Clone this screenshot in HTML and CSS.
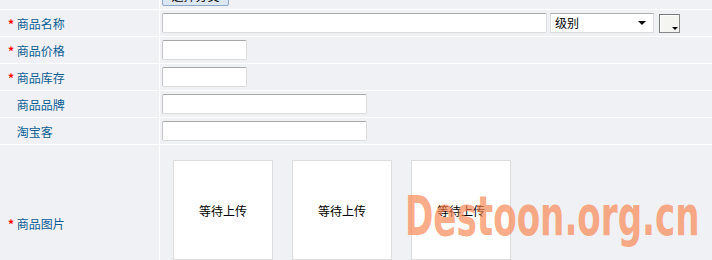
FILE: index.html
```html
<!DOCTYPE html>
<html lang="zh-CN">
<head>
  <meta charset="UTF-8">
  <title>添加商品</title>
  <link rel="stylesheet" href="styles.css">
</head>
<body>
  <div class="page">
  <table class="form">
    <tr class="top">
      <td class="tl"></td>
      <td><button class="btn">选择分类</button></td>
    </tr>
    <tr>
      <td class="tl"><span class="f_red">*</span> 商品名称</td>
      <td>
        <div class="line">
          <input type="text" class="inp name">
          <div class="sel">级别<span class="arr"></span></div>
          <div class="color"><span class="arr small"></span></div>
        </div>
      </td>
    </tr>
    <tr>
      <td class="tl"><span class="f_red">*</span> 商品价格</td>
      <td><input type="text" class="inp short"></td>
    </tr>
    <tr>
      <td class="tl"><span class="f_red">*</span> 商品库存</td>
      <td><input type="text" class="inp short"></td>
    </tr>
    <tr>
      <td class="tl"><span class="f_red none">*</span> 商品品牌</td>
      <td><input type="text" class="inp mid"></td>
    </tr>
    <tr>
      <td class="tl"><span class="f_red none">*</span> 淘宝客</td>
      <td><input type="text" class="inp mid"></td>
    </tr>
    <tr class="thumbs">
      <td class="tl"><span class="f_red">*</span> 商品图片</td>
      <td>
        <div class="pics">
          <div class="pic">等待上传</div>
          <div class="pic">等待上传</div>
          <div class="pic">等待上传</div>
        </div>
      </td>
    </tr>
  </table>
  <div class="mark">Destoon.org.cn</div>
  </div>
</body>
</html>
```

FILE: styles.css
```css
body{
  margin: 0;
  background-color: #f0f1f4;
  font-family: "Noto Sans CJK SC", "Noto Sans", sans-serif;
  font-size: 12px;
  overflow: hidden;
}
.page{
  position: relative;
  height: 260px;
  overflow: hidden;
}
.form{
  border-collapse: collapse;
  width: 100%;
  margin-top: -17px;
}
.form td{
  border-bottom: 1px solid #ffffff;
  height: 26px;
  padding: 0 0 0 2px;
  vertical-align: middle;
}
.form td.tl{
  width: 151px;
  padding-left: 8px;
  border-right: 1px solid #ffffff;
  color: #0a5e94;
  white-space: nowrap;
}
.f_red{
  color: #ff0000;
  font-weight: bold;
}
.f_red.none{
  visibility: hidden;
}
.btn{
  display: block;
  width: 67px;
  height: 22px;
  margin-top: -2px;
  background-color: #dde7f1;
  border: 1px solid #8ea8c8;
  border-radius: 2px;
  font-size: 12px;
  font-family: inherit;
  padding: 0;
}
.line{
  display: flex;
  align-items: center;
}
.inp{
  box-sizing: border-box;
  height: 20px;
  border: 1px solid #dcdcdc;
  border-top-color: #a8a8a8;
  border-left-color: #c4c4c4;
  border-radius: 2px;
  background-color: #ffffff;
  display: block;
  margin: 0;
}
.inp.name{ width: 385px; }
.inp.short{ width: 85px; }
.inp.mid{ width: 205px; }
.sel{
  box-sizing: border-box;
  position: relative;
  width: 104px;
  height: 20px;
  margin-left: 3px;
  padding-left: 4px;
  line-height: 18px;
  background-color: #ffffff;
  border: 1px solid #dcdcdc;
  border-top-color: #b0b0b0;
  color: #000000;
}
.arr{
  position: absolute;
  right: 7px;
  top: 7px;
  border-left: 4px solid transparent;
  border-right: 4px solid transparent;
  border-top: 4px solid #000000;
}
.arr.small{
  right: 1px;
  top: auto;
  bottom: 2px;
  border-width: 3px 3px 0;
}
.color{
  box-sizing: border-box;
  position: relative;
  width: 21px;
  height: 19px;
  margin-left: 5px;
  background-color: #f4f4f0;
  border: 1px solid #888888;
  border-top-color: #7a7a7a;
  border-left-color: #7a7a7a;
  box-shadow: inset 1px 1px 0 #ffffff;
}
.thumbs td{
  height: 156px;
}
.pics{
  display: flex;
  gap: 19px;
  padding-left: 11px;
  padding-top: 15px;
  padding-bottom: 41px;
}
.pic{
  box-sizing: border-box;
  width: 100px;
  height: 100px;
  border: 1px solid #dddddd;
  background-color: #ffffff;
  display: flex;
  align-items: center;
  justify-content: center;
  color: #000000;
}
.mark{
  position: absolute;
  left: 405px;
  top: 189px;
  font-family: "DejaVu Sans Condensed", "DejaVu Sans", sans-serif;
  font-weight: bold;
  font-size: 55px;
  color: rgba(250, 130, 75, 0.68);
  transform: scale(0.69, 1);
  transform-origin: left top;
  line-height: 1;
  white-space: nowrap;
}
```
